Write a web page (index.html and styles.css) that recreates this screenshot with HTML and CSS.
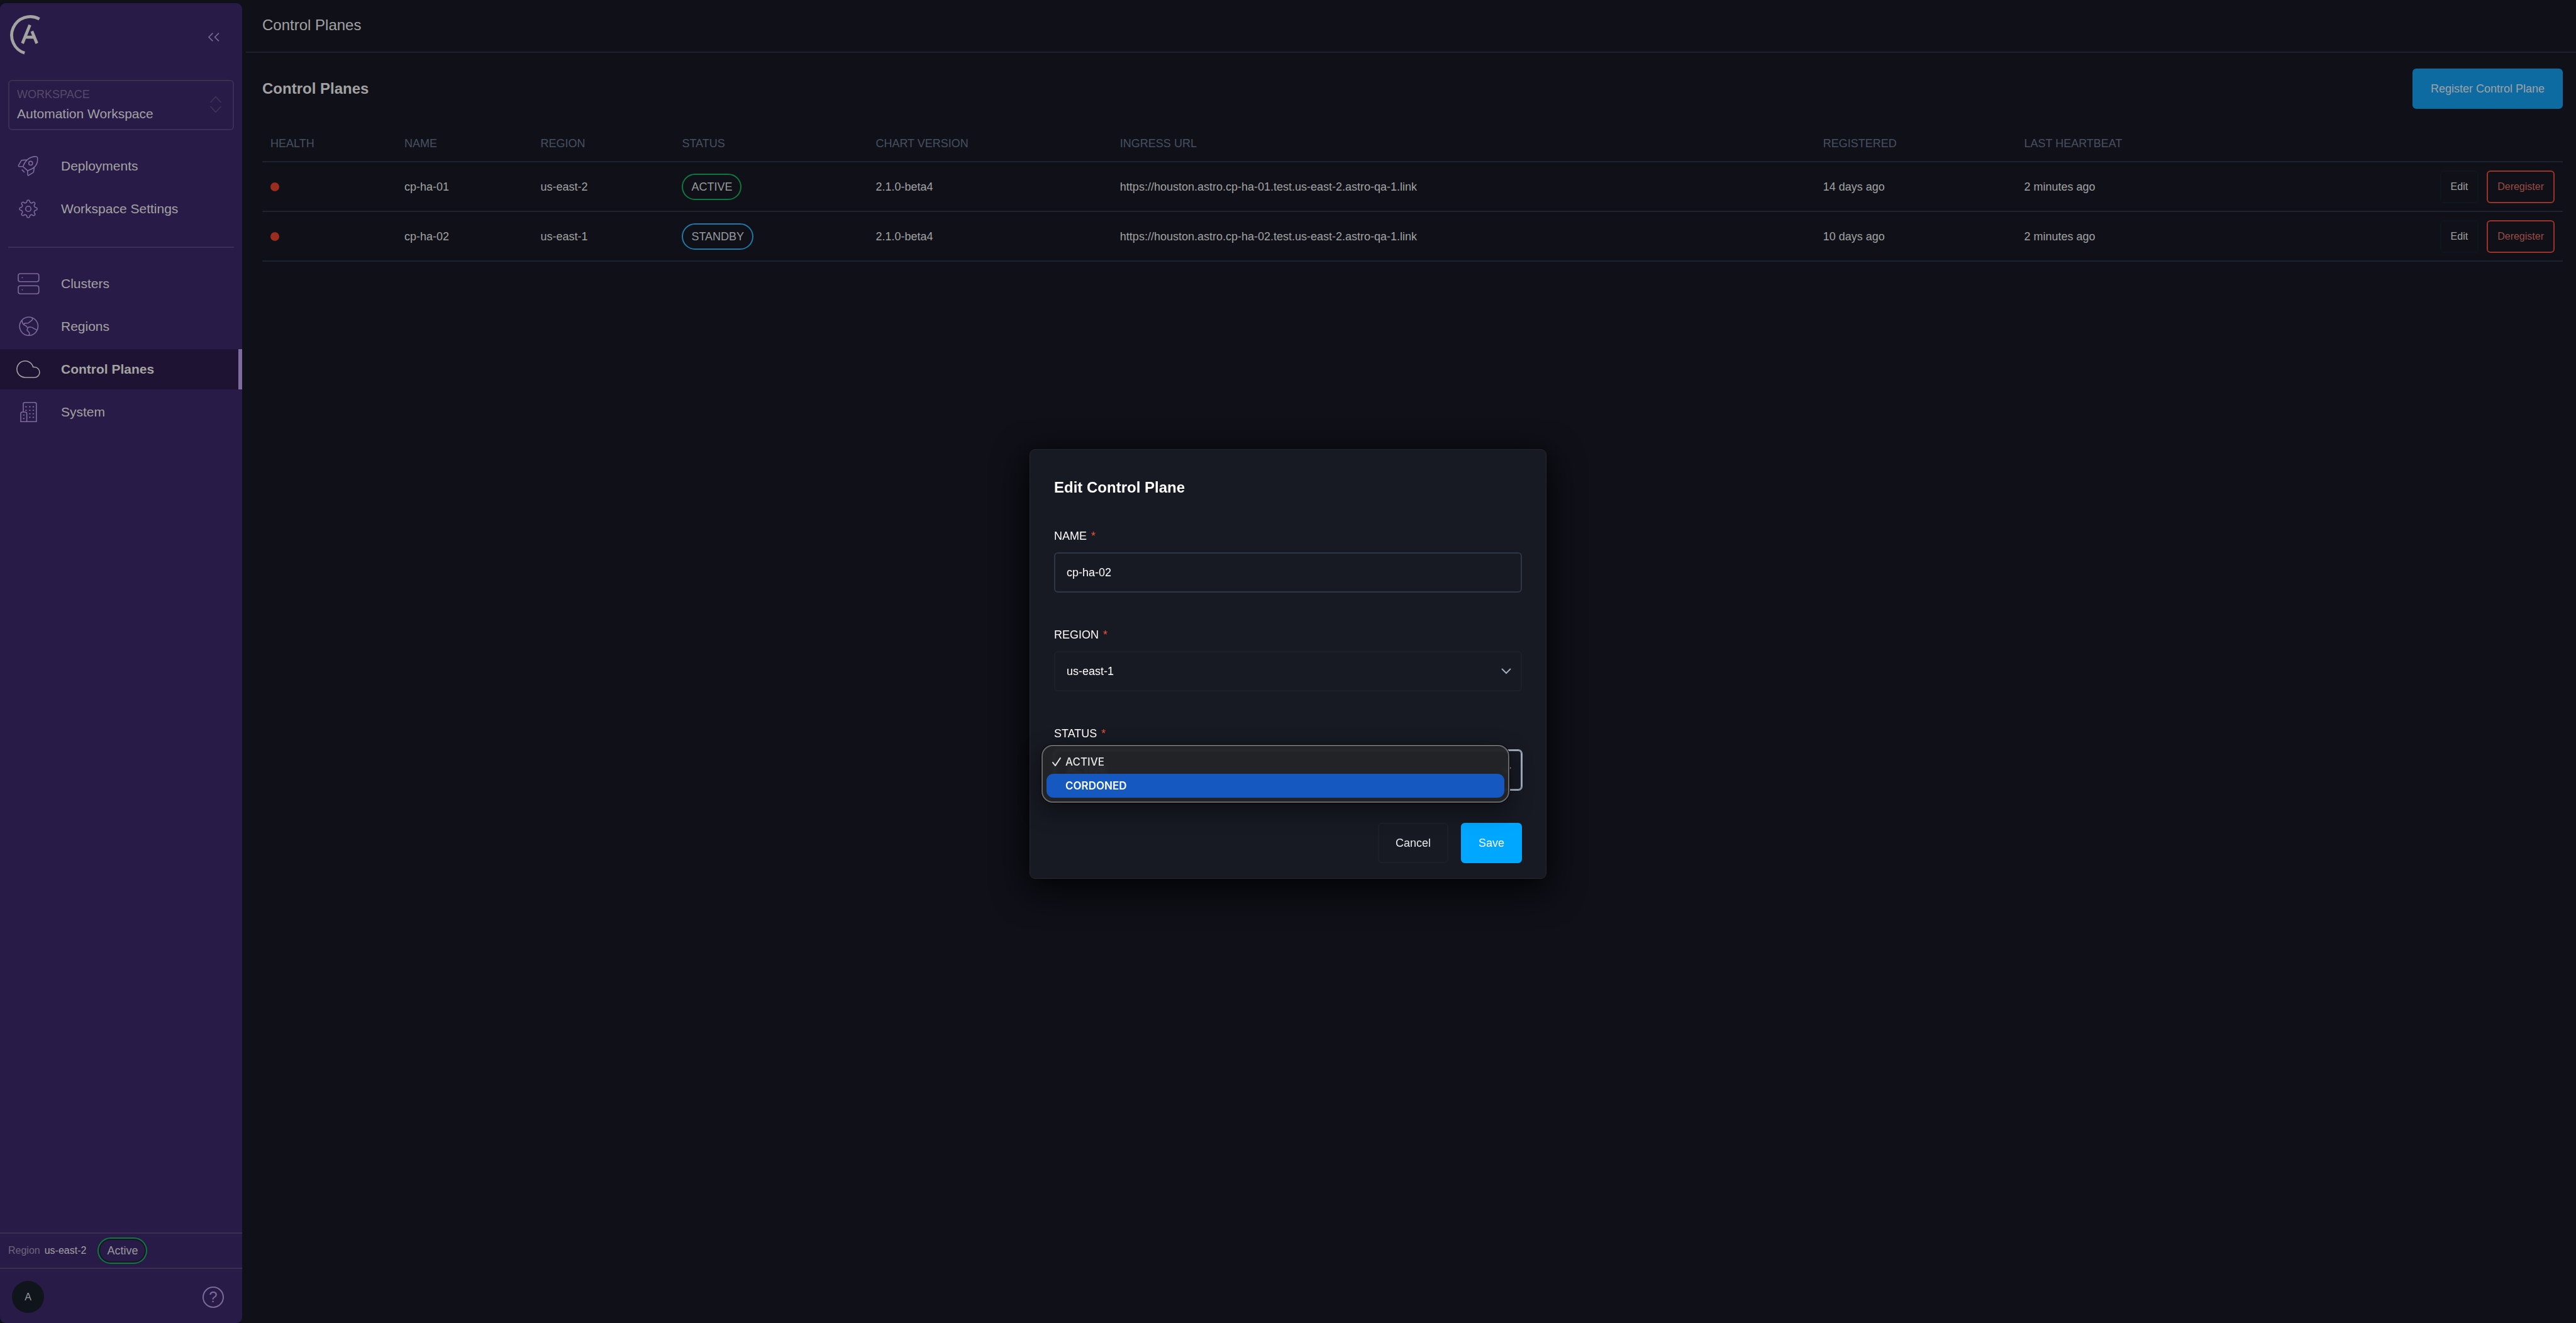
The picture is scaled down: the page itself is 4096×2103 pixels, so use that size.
FILE: index.html
```html
<!DOCTYPE html>
<html lang="en">
<head>
    <meta charset="UTF-8">
    <meta name="viewport" content="width=device-width, initial-scale=1.0">
    <title>Control Planes</title>
    <link rel="stylesheet" href="styles.css">
</head>
<body>
    <div class="app">
        <aside class="sidebar">
            <div class="sidebar-top">
                <a class="logo" href="#" aria-label="Home">
                    <svg viewBox="18 28 68 84" fill="none" stroke="currentColor">
                        <path d="M80.500 38.200A37.300 37.300 0 1 0 51 106.300" stroke-width="6"/>
                        <path d="M46.500 87L61.500 50M65.500 62.700L75.500 87M52 74.500H69" stroke-width="6"/>
                    </svg>
                </a>
                <button class="collapse" aria-label="Collapse sidebar">
                    <svg viewBox="0 0 24 20"><path d="M10 2L2 10l8 8M22 2l-8 8 8 8"/></svg>
                </button>
            </div>

            <button class="workspace">
                <span class="workspace-text">
                    <span class="workspace-label">WORKSPACE</span>
                    <span class="workspace-name">Automation Workspace</span>
                </span>
                <svg viewBox="0 0 26 36"><path d="M2 14L13 2l11 12M2 22l11 12 11-12"/></svg>
            </button>

            <nav class="nav">
                <a href="#">
                    <svg viewBox="0 0 50 50"><path d="M22.600 12.700C27 8 35 5.500 41 6.300Q43 6.500 43.200 8.500C44 16 42 22.500 37 27C33.500 30.500 28.500 32 23.600 34L14.400 26C16 21 18 17 22.600 12.700ZM22.600 12.700L13 13.300Q11.500 13.300 11 14.300L5.600 23.500Q5 25.500 7 26H14.400M23.600 34L23.800 42.500Q24 44 25.500 43.500L34.500 38Q35.400 37.500 35.500 36.500L36.900 27M12.200 32L17.400 37.500"/><circle cx="29.700" cy="19.300" r="3.800"/></svg>
                    Deployments
                </a>
                <a href="#">
                    <svg viewBox="-25 -25 50 50"><path d="M14.200-2.800A2.850 2.850 0 1 1 14.200 2.800A4 4 0 0 0 12 8.100A2.850 2.850 0 1 1 8.100 12A4 4 0 0 0 2.800 14.200A2.850 2.850 0 1 1-2.800 14.200A4 4 0 0 0-8.100 12A2.850 2.850 0 1 1-12 8.100A4 4 0 0 0-14.200 2.800A2.850 2.850 0 1 1-14.200-2.800A4 4 0 0 0-12-8.100A2.850 2.850 0 1 1-8.100-12A4 4 0 0 0-2.800-14.200A2.850 2.850 0 1 1 2.800-14.200A4 4 0 0 0 8.100-12A2.850 2.850 0 1 1 12-8.100A4 4 0 0 0 14.200-2.800Z"/><circle r="5.300"/></svg>
                    Workspace Settings
                </a>
            </nav>

            <hr class="nav-divider">

            <nav class="nav">
                <a href="#">
                    <svg viewBox="0 0 50 50"><rect x="5" y="5" width="41" height="16" rx="4"/><rect x="5" y="29" width="41" height="16" rx="4"/><path d="M12 13h2M12 37h2"/></svg>
                    Clusters
                </a>
                <a href="#">
                    <svg viewBox="0 0 50 50"><circle cx="26" cy="24.500" r="18.300"/><path d="M12.600 12.500C12.500 17 13.300 19.500 16.500 21.800C16.500 19.500 17 18.600 19 18.500L25 18.200L32 12.800Q33.800 11 33.200 9.500L32.200 7.300M16.500 21.800Q19 22.500 20 23.500Q22 26.500 23.500 26.300M42.300 32L36 29C32 25.500 29 25.500 25.800 26.200Q23.500 27 23.800 29Q22 31 23 33.200Q27.500 36 27.200 39L26.700 42.500"/></svg>
                    Regions
                </a>
                <a class="active" href="#" aria-current="page">
                    <svg viewBox="0 0 50 50"><path d="M19 41.300A16.400 16.400 0 1 1 34.600 20.700H37.200A10.300 10.300 0 0 1 37.200 41.300Z"/></svg>
                    Control Planes
                </a>
                <a href="#">
                    <svg viewBox="0 0 50 50"><path d="M15 25V9Q15 6 18 6H38Q41 6 41 9V44H10V28Q10 25 13 25H19Q22 25 22 28V44"/><path d="M19 14.500h3M26.500 14.500h3M33.500 14.500h3M19 21.500h3M26.500 21.500h3M33.500 21.500h3M26.500 28.500h3M33.500 28.500h3M26.500 35.500h3M33.500 35.500h3M14.500 31h3M14.500 38h3"/></svg>
                    System
                </a>
            </nav>

            <div class="region-bar">
                <span class="region-label">Region</span>
                <span class="region-name">us-east-2</span>
                <span class="pill pill-green pill-shaded">Active</span>
            </div>
            <div class="user-bar">
                <button class="avatar">A</button>
                <button class="help" aria-label="Help">?</button>
            </div>
        </aside>

        <main class="main">
            <header class="topbar">Control Planes</header>

            <section class="content">
                <div class="content-head">
                    <h1>Control Planes</h1>
                    <button class="btn btn-register">Register Control Plane</button>
                </div>

                <table class="planes">
                    <colgroup>
                        <col class="col-health">
                        <col class="col-name">
                        <col class="col-region">
                        <col class="col-status">
                        <col class="col-version">
                        <col class="col-url">
                        <col class="col-registered">
                        <col>
                        <col class="col-actions">
                    </colgroup>
                    <thead>
                        <tr>
                            <th>HEALTH</th>
                            <th>NAME</th>
                            <th>REGION</th>
                            <th>STATUS</th>
                            <th>CHART VERSION</th>
                            <th>INGRESS URL</th>
                            <th>REGISTERED</th>
                            <th>LAST HEARTBEAT</th>
                            <th></th>
                        </tr>
                    </thead>
                    <tbody>
                        <tr>
                            <td><span class="dot"></span></td>
                            <td>cp-ha-01</td>
                            <td>us-east-2</td>
                            <td><span class="pill pill-green">ACTIVE</span></td>
                            <td>2.1.0-beta4</td>
                            <td>https://houston.astro.cp-ha-01.test.us-east-2.astro-qa-1.link</td>
                            <td>14 days ago</td>
                            <td>2 minutes ago</td>
                            <td>
                                <div class="row-actions">
                                    <button class="btn-small">Edit</button>
                                    <button class="btn-small btn-danger">Deregister</button>
                                </div>
                            </td>
                        </tr>
                        <tr>
                            <td><span class="dot"></span></td>
                            <td>cp-ha-02</td>
                            <td>us-east-1</td>
                            <td><span class="pill pill-blue">STANDBY</span></td>
                            <td>2.1.0-beta4</td>
                            <td>https://houston.astro.cp-ha-02.test.us-east-2.astro-qa-1.link</td>
                            <td>10 days ago</td>
                            <td>2 minutes ago</td>
                            <td>
                                <div class="row-actions">
                                    <button class="btn-small">Edit</button>
                                    <button class="btn-small btn-danger">Deregister</button>
                                </div>
                            </td>
                        </tr>
                    </tbody>
                </table>
            </section>
        </main>
    </div>

    <div class="overlay">
        <form class="modal" role="dialog" aria-labelledby="modal-title">
            <h2 id="modal-title">Edit Control Plane</h2>

            <div class="field">
                <label for="cp-name">NAME <span class="required">*</span></label>
                <div class="control">
                    <input type="text" id="cp-name" value="cp-ha-02">
                </div>
            </div>

            <div class="field">
                <label for="cp-region">REGION <span class="required">*</span></label>
                <div class="control">
                    <select id="cp-region">
                        <option>us-east-1</option>
                        <option>us-east-2</option>
                    </select>
                    <svg class="chevron" viewBox="0 0 16 10"><path d="M1 1l7 7 7-7"/></svg>
                </div>
            </div>

            <div class="field">
                <label for="cp-status">STATUS <span class="required">*</span></label>
                <div class="control">
                    <select id="cp-status" class="open">
                        <option>ACTIVE</option>
                        <option>CORDONED</option>
                    </select>
                    <svg class="chevron" viewBox="0 0 16 10"><path d="M1 1l7 7 7-7"/></svg>
                    <ul class="menu" role="listbox" aria-label="Status">
                        <li role="option" aria-selected="true">
                            <svg viewBox="0 0 14 14"><path d="M1 8l4 5 8-12"/></svg>
                            ACTIVE
                        </li>
                        <li class="highlight" role="option" aria-selected="false">CORDONED</li>
                    </ul>
                </div>
            </div>

            <div class="modal-actions">
                <button type="button" class="btn btn-cancel">Cancel</button>
                <button type="button" class="btn btn-save">Save</button>
            </div>
        </form>
    </div>
</body>
</html>
```

FILE: styles.css
```css
* {
    box-sizing: border-box;
}
body {
    margin: 0;
    background: #0f1018;
    color: #a2a2a2;
    font-family: "Helvetica Neue", "Liberation Sans", Arial, sans-serif;
    font-size: 18px;
    line-height: 24px;
}
button, input, select {
    font-family: inherit;
    font-size: 18px;
    color: inherit;
    margin: 0;
}
button {
    background: none;
    border: none;
    padding: 0;
    cursor: pointer;
}
svg {
    fill: none;
    stroke: currentColor;
    stroke-width: 2;
    display: block;
}
h1, h2 {
    margin: 0;
    font-size: 24px;
    line-height: 32px;
}
.app {
    display: flex;
    min-height: 100vh;
}

/* sidebar */
.sidebar {
    width: 385px;
    margin: 5px 6px 0 0;
    background: #281b48;
    border-radius: 9px;
    display: flex;
    flex-direction: column;
    flex-shrink: 0;
}
.sidebar-top {
    display: flex;
    justify-content: space-between;
    align-items: flex-start;
    height: 122px;
    padding: 17px 35px 0 13px;
}
.logo {
    color: #a3a3a0;
}
.logo svg {
    width: 54px;
    height: 67px;
}
.collapse {
    margin-top: 29px;
    color: #7c6b9c;
}
.collapse svg {
    width: 20px;
    height: 16px;
}
.workspace {
    display: flex;
    justify-content: space-between;
    align-items: center;
    height: 80px;
    margin: 0 13px;
    padding: 0 17px 3px 12px;
    border: 2px solid #3c2e55;
    border-radius: 6px;
    text-align: left;
}
.workspace-text {
    display: flex;
    flex-direction: column;
    gap: 7px;
}
.workspace-label {
    color: #574a67;
    line-height: 24px;
}
.workspace-name {
    font-size: 21px;
    line-height: 24px;
}
.workspace svg {
    width: 20px;
    height: 28px;
    color: #41335b;
}
.nav {
    display: flex;
    flex-direction: column;
    gap: 4px;
    padding-top: 25px;
}
.nav a {
    display: flex;
    align-items: center;
    gap: 32px;
    height: 64px;
    padding-left: 25px;
    color: #a3a3a0;
    font-size: 21px;
    text-decoration: none;
}
.nav svg {
    width: 40px;
    height: 40px;
    color: #7c6b9c;
}
.nav a.active {
    background: #1f1334;
    border-right: 6px solid #7c6b9c;
    font-weight: bold;
}
.nav a.active svg {
    color: #a3a3a0;
}
.nav-divider {
    width: 359px;
    height: 2px;
    margin: 28px 13px 0;
    border: none;
    background: #3c2e55;
}
.region-bar {
    display: flex;
    align-items: center;
    height: 58px;
    margin-top: auto;
    padding-left: 13px;
    border-top: 2px solid #3c2e55;
    border-bottom: 2px solid #3c2e55;
    font-size: 16px;
}
.region-label {
    color: #6f6479;
    margin-right: 7px;
}
.region-name {
    margin-right: 18px;
}
.user-bar {
    display: flex;
    justify-content: space-between;
    align-items: center;
    padding: 19px 29px 16px 19px;
}
.avatar {
    width: 51px;
    height: 51px;
    border-radius: 50%;
    background: #10151b;
    color: #96989a;
    font-size: 16px;
}
.help {
    width: 34px;
    height: 34px;
    border: 2px solid #7c6b9c;
    border-radius: 50%;
    color: #7c6b9c;
    font-size: 24px;
    line-height: 28px;
}

/* status pills */
.pill {
    display: inline-block;
    padding: 0 13px;
    border: 2px solid;
    border-radius: 21px;
    font-size: 18px;
    line-height: 38px;
    vertical-align: middle;
}
.pill-green {
    border-color: #0f783f;
    color: #979a9b;
}
.pill-blue {
    border-color: #2178a5;
    color: #979a9b;
}
.pill-shaded {
    box-shadow: inset 0 0 0 2px #151720;
}

/* main area */
.main {
    flex: 1;
    min-width: 0;
}
.topbar {
    padding: 24px 26px 26px;
    border-bottom: 2px solid #1c232e;
    font-size: 24px;
    line-height: 32px;
}
.content {
    padding: 25px 21px 0 26px;
}
.content-head {
    display: flex;
    justify-content: space-between;
    align-items: center;
    margin-bottom: 26px;
}
.btn {
    height: 64px;
    padding: 0 26px;
    border: 2px solid transparent;
    border-radius: 6px;
    line-height: 24px;
}
.btn-register {
    padding: 0 27px;
    background: #0e6ba2;
    border-color: #0e6ba2;
}
.planes {
    width: 100%;
    table-layout: fixed;
    border-collapse: separate;
    border-spacing: 0;
}
.planes th {
    padding: 17px 13px 16px;
    border-bottom: 2px solid #1c232e;
    color: #475060;
    font-weight: normal;
    text-align: left;
}
.planes td {
    padding: 13px 13px 12px;
    border-bottom: 2px solid #1c232e;
    vertical-align: middle;
}
.col-health { width: 5.82%; }
.col-name { width: 5.92%; }
.col-region { width: 6.15%; }
.col-status { width: 8.42%; }
.col-version { width: 10.62%; }
.col-url { width: 30.56%; }
.col-registered { width: 8.74%; }
.col-actions { width: 10%; }
.dot {
    display: block;
    width: 14px;
    height: 14px;
    border-radius: 50%;
    background: #9b2d1d;
}
.row-actions {
    display: flex;
    justify-content: flex-end;
    gap: 13px;
}
.btn-small {
    height: 52px;
    padding: 0 15px;
    border: 2px solid #0f161d;
    border-radius: 6px;
    font-size: 16px;
}
.btn-danger {
    border-color: #9b3329;
    color: #994c44;
}

/* edit dialog */
.overlay {
    position: fixed;
    inset: 0;
    display: flex;
    align-items: center;
    justify-content: center;
    padding-top: 8px;
}
.modal {
    width: 822px;
    padding: 44px 38px 24px;
    border: 1px solid #26282f;
    border-radius: 9px;
    background: #171923;
    color: #fff;
    box-shadow: 0 16px 56px rgba(0, 0, 0, 0.8), 0 0 24px rgba(0, 0, 0, 0.3);
}
.modal h2 {
    margin-bottom: 49px;
}
.field {
    margin-bottom: 55px;
}
.field label {
    display: block;
    margin-bottom: 14px;
}
.required {
    margin-left: 2px;
    color: #f0523a;
}
.control {
    position: relative;
}
.control input,
.control select {
    display: block;
    width: 100%;
    height: 64px;
    padding: 0 18px;
    border: 2px solid #2d3748;
    border-radius: 6px;
    background: transparent;
    appearance: none;
    outline: none;
}
.control select {
    border-color: #1b202b;
}
.control select.open {
    border-color: #a0aec0;
    box-shadow: 0 0 0 1px #a0aec0;
}
.chevron {
    position: absolute;
    top: 27px;
    right: 17px;
    width: 16px;
    height: 10px;
    color: #a0aec0;
    pointer-events: none;
}
.menu {
    position: absolute;
    top: -8px;
    left: -20px;
    width: 744px;
    margin: 0;
    padding: 6px;
    border: 2px solid #66676c;
    border-radius: 18px;
    background: rgba(35, 36, 39, 0.94);
    backdrop-filter: blur(2px);
    box-shadow: 0 0 0 1px #000, 0 12px 36px rgba(0, 0, 0, 0.4);
    list-style: none;
    font-family: Inter, "Liberation Sans", sans-serif;
    font-size: 17px;
    font-weight: 500;
    color: #e4e4e5;
}
.menu li {
    display: flex;
    align-items: center;
    gap: 7px;
    height: 38px;
    padding: 0 0 1px 9px;
    border-radius: 11px;
}
.menu li svg {
    width: 14px;
    height: 14px;
    stroke-linecap: round;
    stroke-linejoin: round;
}
.menu li.highlight {
    padding-left: 30px;
    background: #1558bf;
    color: #fff;
    font-weight: 600;
}
.modal-actions {
    display: flex;
    justify-content: flex-end;
    gap: 20px;
    margin-top: -3px;
}
.btn-cancel {
    border-color: #1b202b;
    color: #e6e8ee;
}
.btn-save {
    background: #00a7ff;
    border-color: #00a7ff;
}
```
